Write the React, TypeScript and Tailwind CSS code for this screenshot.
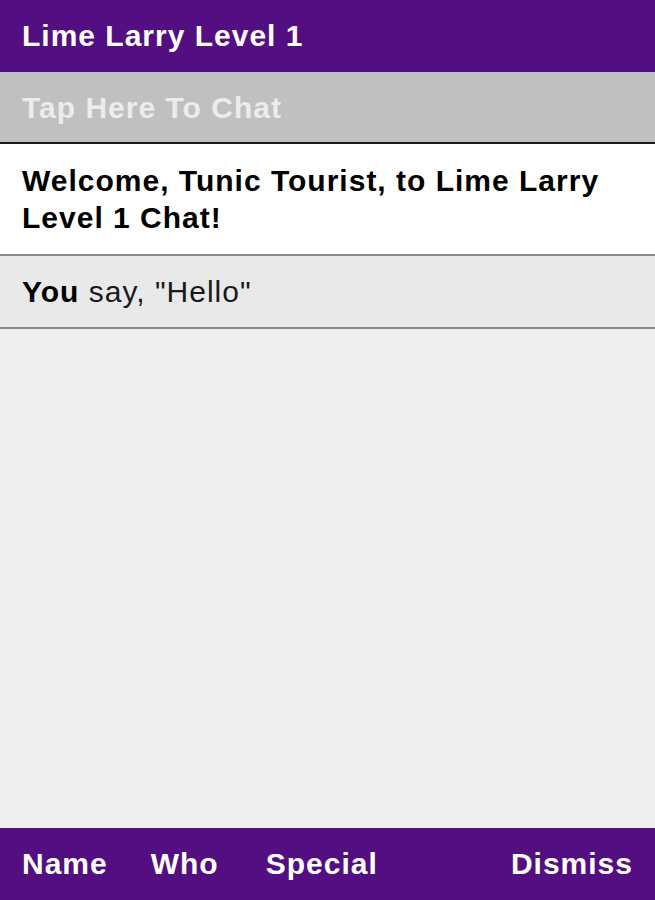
export default function App() {
  return (
    <div className="flex h-[900px] w-[655px] flex-col bg-[#efefef] font-['Liberation_Sans',Arial,sans-serif] text-[30px] tracking-[1px]">
      <div className="flex h-[72px] items-center bg-[#530e81] px-[22px] pb-[2px] font-bold text-white">
        Lime Larry Level 1
      </div>
      <button className="flex h-[72px] items-center border-b-2 border-[#1a1a1a] bg-[#c0c0c0] px-[22px] text-left font-bold text-[#ececec]">
        Tap Here To Chat
      </button>
      <div className="border-b-2 border-[#8a8a8a] bg-white px-[22px] pb-[18px] pt-[18px] font-bold leading-[37px] text-black">
        Welcome, Tunic Tourist, to Lime Larry Level 1 Chat!
      </div>
      <div className="flex h-[73px] items-center border-b-2 border-[#8a8a8a] bg-[#e9e9e9] px-[22px] text-[#1a1a1a]">
        <span>
          <b className="text-black">You</b> say, "Hello"
        </span>
      </div>
      <div className="flex-1" />
      <div className="flex h-[72px] items-center bg-[#530e81] px-[22px] pb-[2px] font-bold text-white">
        <button>Name</button>
        <button className="ml-[43px]">Who</button>
        <button className="ml-[47px]">Special</button>
        <button className="ml-auto">Dismiss</button>
      </div>
    </div>
  );
}
